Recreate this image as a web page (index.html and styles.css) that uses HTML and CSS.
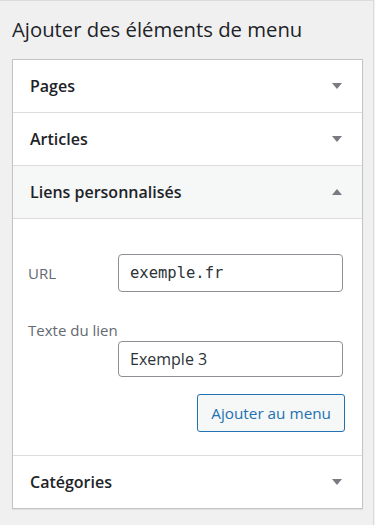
FILE: index.html
```html
<!DOCTYPE html>
<html lang="fr">
<head>
    <meta charset="UTF-8">
    <title>Ajouter des éléments de menu</title>
    <link rel="stylesheet" href="styles.css">
</head>
<body>
    <div class="screen">
        <h2 class="title">Ajouter des éléments de menu</h2>

        <div class="panel">
            <div class="section">
                <div class="section-head">
                    <span>Pages</span>
                    <span class="arrow"></span>
                </div>
            </div>

            <div class="section">
                <div class="section-head">
                    <span>Articles</span>
                    <span class="arrow"></span>
                </div>
            </div>

            <div class="section open">
                <div class="section-head">
                    <span>Liens personnalisés</span>
                    <span class="arrow"></span>
                </div>
                <div class="section-body">
                    <div class="field field-url">
                        <label class="field-label" for="menu-url">URL</label>
                        <input class="field-input mono" id="menu-url" type="text" value="exemple.fr">
                    </div>
                    <div class="field field-text">
                        <label class="field-label" for="menu-text">Texte du lien</label>
                        <input class="field-input" id="menu-text" type="text" value="Exemple 3">
                    </div>
                    <div class="actions">
                        <button class="btn-secondary" type="button">Ajouter au menu</button>
                    </div>
                </div>
            </div>

            <div class="section">
                <div class="section-head">
                    <span>Catégories</span>
                    <span class="arrow"></span>
                </div>
            </div>
        </div>
    </div>
</body>
</html>
```

FILE: styles.css
```css
html {
    background-color: #f0f0f1;
}
body {
    margin: 0;
    font-family: "Open Sans", "Noto Sans", sans-serif;
    color: #1d2327;
}
.screen {
    width: 361px;
    height: 524px;
    padding-left: 12px;
    border-top: 1px solid #dcdcde;
    border-right: 1px solid #dcdcde;
    background-color: #f0f0f1;
}
.title {
    margin: 0;
    padding-top: 14px;
    height: 58px;
    font-size: 20.3px;
    font-weight: 400;
    line-height: 28px;
    color: #1d2327;
    box-sizing: border-box;
}
.panel {
    width: 351px;
    box-sizing: border-box;
    background: white;
    border: 1px solid #c3c4c7;
    box-shadow: 0 1px 1px rgba(0,0,0,0.06);
}
.section {
    border-bottom: 1px solid #dcdcde;
}
.section:last-child {
    border-bottom: none;
}
.section-head {
    height: 52px;
    display: flex;
    align-items: center;
    justify-content: space-between;
    padding: 0 20px 0 17px;
    font-size: 16px;
    font-weight: 600;
}
.open .section-head {
    background-color: #f6f7f7;
    border-bottom: 1px solid #dcdcde;
}
.arrow {
    width: 0;
    height: 0;
    border-left: 5px solid transparent;
    border-right: 5px solid transparent;
    border-top: 6px solid #787c82;
}
.open .arrow {
    border-top: none;
    border-bottom: 6px solid #787c82;
}
.section-body {
    padding: 35px 17px 23px 15px;
}
.field-label {
    font-size: 15px;
    color: #646970;
}
.field-url {
    display: flex;
    align-items: center;
}
.field-url .field-label {
    width: 90px;
}
.field-url .field-input {
    height: 38px;
}
.field-text {
    margin-top: 28px;
}
.field-text .field-label {
    display: block;
    line-height: 20px;
}
.field-text .field-input {
    margin: 1px 0 0 90px;
    height: 36px;
}
.field-input {
    display: block;
    width: 225px;
    box-sizing: border-box;
    padding: 0 11px;
    border: 1px solid #8c8f94;
    border-radius: 4px;
    font-family: "Open Sans", "Noto Sans", sans-serif;
    font-size: 16px;
    color: #2c3338;
    background: white;
    outline: none;
}
.field-input.mono {
    font-family: "DejaVu Sans Mono", "Liberation Mono", monospace;
    font-size: 15.5px;
}
.actions {
    display: flex;
    justify-content: flex-end;
    margin-top: 17px;
}
.btn-secondary {
    height: 38px;
    padding: 0 13px;
    border: 1px solid #2271b1;
    border-radius: 3px;
    background: #f6f7f7;
    color: #2271b1;
    font-family: "Open Sans", "Noto Sans", sans-serif;
    font-size: 15.3px;
    cursor: pointer;
}
```
